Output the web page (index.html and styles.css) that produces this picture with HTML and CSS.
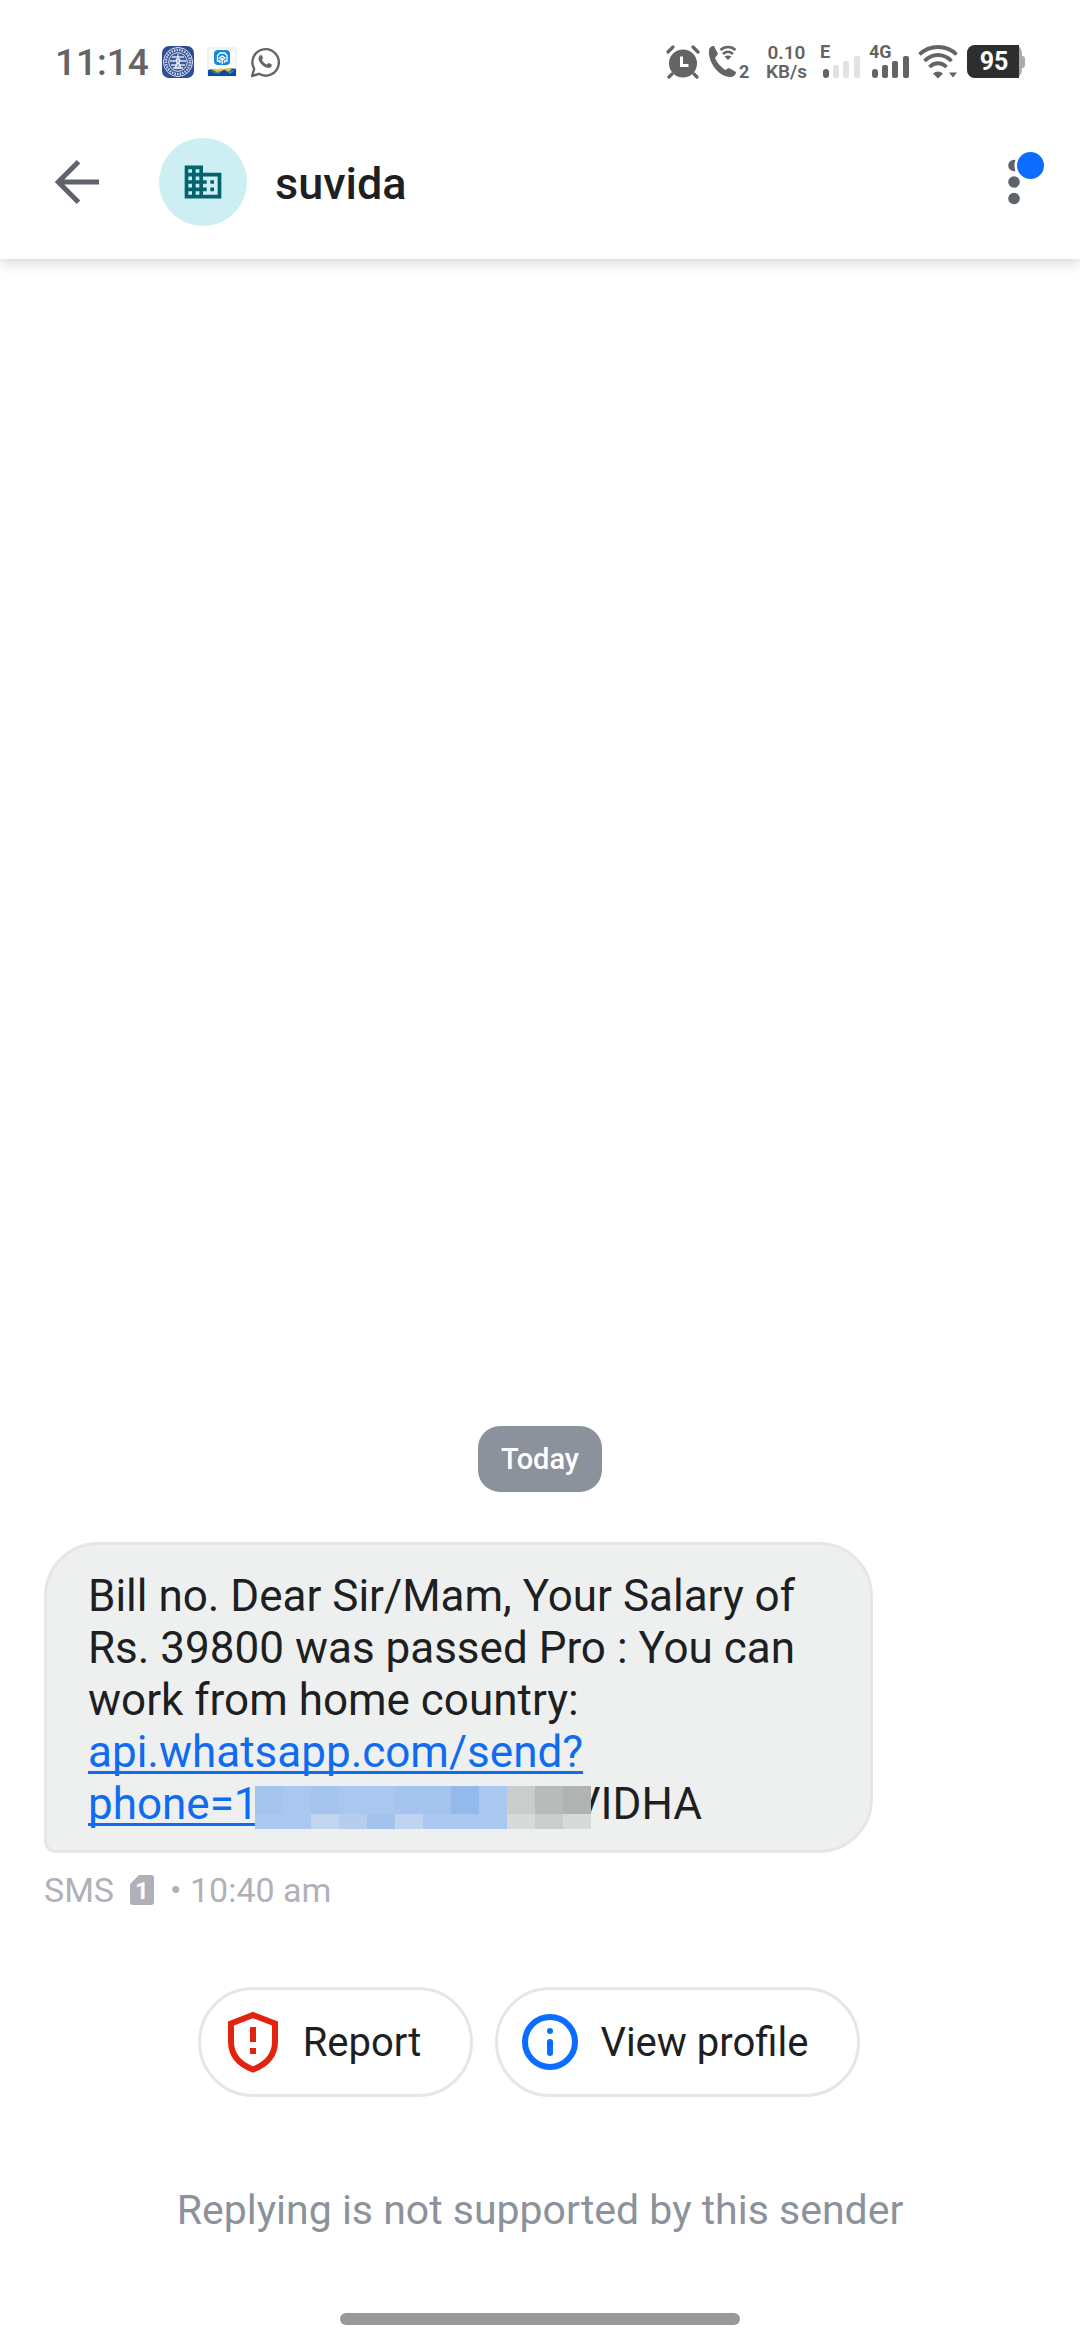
FILE: index.html
```html
<!DOCTYPE html>
<html lang="en">
<head>
  <meta charset="UTF-8" />
  <meta name="viewport" content="width=device-width, initial-scale=1.0"/>
  <title>suvida</title>
  <link rel="stylesheet" href="styles.css">
</head>
<body>
  <div class="status-bar">
    <div class="status-left">
      <span class="clock">11:14</span>
      <svg width="32" height="32" viewBox="0 0 32 32">
        <rect width="32" height="32" rx="7" fill="#2f4d93"/>
        <circle cx="16" cy="16" r="14.5" fill="none" stroke="#dfe6f4" stroke-width="1"/>
        <circle cx="16" cy="16" r="12" fill="none" stroke="#c3cee6" stroke-width="2.6" stroke-dasharray="1.6 1"/>
        <circle cx="16" cy="16" r="9.3" fill="#3d5999" stroke="#e8edf7" stroke-width="1"/>
        <path d="M10 11h12M8 15h16M9 19h14M11 22h10" stroke="#dde4f1" stroke-width="1.5"/>
        <path d="M16 8v5M14 13h4l-1 4h-2zM13 22l2-5h2l2 5z" stroke="#fff" stroke-width="1" fill="#9fb0d5"/>
      </svg>
      <svg width="30" height="32" viewBox="0 0 30 32">
        <rect x="1" y="2" width="28" height="28" fill="#fafafa" stroke="#e6e6e6" stroke-width="1"/>
        <rect x="7" y="4" width="16" height="15" rx="4" fill="#1687dc"/>
        <path d="M13 17v-2h-2.500V9.500L13 7h4.500L20 9.500V15h-2.500v2M15.200 18v-6M12.500 12l2.700-2 2.800 2-2.800 2z" fill="none" stroke="#fff" stroke-width="1.300"/>
        <path d="M1 24c5-2 8 1 14 0s9-2 14-1v7H1z" fill="#17479b"/>
        <path d="M5 24c3-3 5 1 9-2l2 2-4 3zM17 23c3-2 5 0 8 0l-4 3z" fill="#f2bd2c"/>
        <path d="M2 25l7 1 6-1-4 3zM16 22l4 4 8-2-5 4z" fill="#279f9e"/>
      </svg>
      <svg width="30" height="32" viewBox="0 0 30 32" fill="none" stroke="#666">
        <path d="M2 30l2.200-7A13.200 13.200 0 1 1 9 27.800z" stroke-width="2.400" stroke-linejoin="round"/>
        <path d="M10 9.500c.8-.8 1.700-.6 2 .2l1 2.300c.2.700-1.200 1.700-.9 2.300 1 1.900 2.500 3.300 4.500 4.100.8.200 1.600-1.700 2.300-1.400l2.500 1.200c.8.500.3 2.300-.6 3-1.200.9-2.600.9-4.400.3-3.500-1.300-5.800-3.700-7.400-6.800-.9-2.100-.4-3.900 1-5.200z" fill="#666" stroke="none"/>
      </svg>
    </div>
    <div class="status-right">
      <svg width="34" height="34" viewBox="0 0 34 34" fill="none" stroke="#646464" stroke-linecap="round">
        <circle cx="17" cy="18.500" r="14" fill="#646464" stroke="none"/>
        <path d="M2 7l5-5M27 2l5 5M6 29l-3 3M28 29l3 3" stroke-width="3.200"/>
        <path d="M15.500 11.500v9h7" stroke="#fff" stroke-width="3" stroke-linecap="butt"/>
      </svg>
      <svg width="42" height="44" viewBox="0 -5 42 44">
        <path d="M1 6c0-3 2-5 5-5l4 8-3 4c2 5 6 9 10 12l4-2 7 4c0 3-3 5-6 5C11 32 0 17 1 6z" fill="#646464"/>
        <path d="M12.500 5c4-4 11-4 15 0M15 9c3-3 7-3 10 0" fill="none" stroke="#646464" stroke-width="2.600"/>
        <path d="M16.500 11.500q3.500-2 7 0L20 15z" fill="#646464"/>
        <text x="31" y="33" class="net">2</text>
      </svg>
      <div class="speed"><span>0.10</span><span>KB/s</span></div>
      <svg width="41" height="44" viewBox="0 -5 41 44">
        <text x="0" y="13" class="net">E</text>
        <rect x="3" y="24" width="6" height="9" rx="3" fill="#646464"/>
        <g fill="#e2e2e2">
          <rect x="13" y="20" width="6" height="13" rx="2"/>
          <rect x="23" y="16" width="6" height="17" rx="2"/>
          <rect x="34" y="11" width="6" height="22" rx="2"/>
        </g>
      </svg>
      <svg width="41" height="44" viewBox="0 -5 41 44">
        <text x="0" y="13" class="net">4G</text>
        <g fill="#646464">
          <rect x="3" y="24" width="6" height="9" rx="3"/>
          <rect x="13" y="20" width="6" height="13" rx="2"/>
          <rect x="23" y="16" width="6" height="17" rx="2"/>
          <rect x="34" y="11" width="6" height="22" rx="2"/>
        </g>
      </svg>
      <svg width="41" height="34" viewBox="0 0 41 34">
        <path d="M1.500 9.500c10-10 27-10 37 0M6.500 16c8-8 19-8 27 0M11.500 22c5-5 12-5 17 0" fill="none" stroke="#646464" stroke-width="3.800"/>
        <path d="M15 28.500q5-4 10 0l-5 5zM31 27.500h8l-4 5z" fill="#646464"/>
      </svg>
      <svg width="58" height="34" viewBox="0 0 58 34">
        <rect width="55" height="33" rx="8" fill="#aaa"/>
        <rect x="50" y="11" width="8" height="12" rx="3" fill="#aaa"/>
        <path d="M8 0h44v33H8a8 8 0 0 1-8-8V8a8 8 0 0 1 8-8z" fill="#2e2e2e"/>
        <text x="27" y="25" class="percent">95</text>
      </svg>
    </div>
  </div>

  <header class="header">
    <button class="icon-btn" aria-label="Back">
      <svg width="44" height="44" viewBox="0 0 44 44" fill="none" stroke="#5f636b" stroke-width="5">
        <path d="M44 22H4M23.500 1.800L3.300 22l20.200 20.200"/>
      </svg>
    </button>
    <div class="avatar">
      <svg width="44" height="44" viewBox="0 0 24 24" fill="#03646d">
        <path d="M12 7V3H2v18h20V7H12zM6 19H4v-2h2v2zm0-4H4v-2h2v2zm0-4H4V9h2v2zm0-4H4V5h2v2zm4 12H8v-2h2v2zm0-4H8v-2h2v2zm0-4H8V9h2v2zm0-4H8V5h2v2zm10 12h-8v-2h2v-2h-2v-2h2v-2h-2V9h8v10zm-2-8h-2v2h2v-2zm0 4h-2v2h2v-2z"/>
      </svg>
    </div>
    <h1>suvida</h1>
    <button class="icon-btn" aria-label="More options">
      <svg width="38" height="60" viewBox="0 0 38 60">
        <g fill="#5f636b">
          <circle cx="8" cy="13.500" r="5.800"/>
          <circle cx="8" cy="30" r="5.800"/>
          <circle cx="8" cy="46.500" r="5.800"/>
        </g>
        <circle cx="24.500" cy="13.500" r="16" fill="#fff"/>
        <circle cx="24.500" cy="13.500" r="13.500" fill="#0b6cff"/>
      </svg>
    </button>
  </header>

  <main class="thread">
    <div class="day">Today</div>
    <div class="bubble">
      Bill no. Dear Sir/Mam, Your Salary of<br>
      Rs. 39800 was passed Pro : You can<br>
      work from home country:<br>
      <a href="#">api.whatsapp.com/send?<br>phone=1</a><svg class="mosaic" width="336" height="43" viewBox="0 0 336 43" shape-rendering="crispEdges">
        <rect width="252" height="43" fill="#a9c7ef"/>
        <rect width="28" height="28" fill="#a5c4ed"/>
        <rect x="56" width="28" height="28" fill="#a4c3ed"/>
        <rect x="140" width="28" height="28" fill="#a5c4ed"/>
        <rect x="168" width="28" height="28" fill="#a4c4ee"/>
        <rect x="196" width="28" height="28" fill="#94baec"/>
        <rect x="56" y="28" width="28" height="15" fill="#c1d5f1"/>
        <rect x="84" y="28" width="28" height="15" fill="#b6cdec"/>
        <rect x="112" y="28" width="28" height="15" fill="#a3c3ee"/>
        <rect x="140" y="28" width="28" height="15" fill="#c0d4f2"/>
        <rect x="252" width="28" height="28" fill="#cbcdcc"/>
        <rect x="280" width="28" height="28" fill="#b8bbba"/>
        <rect x="308" width="28" height="28" fill="#b0b3b2"/>
        <rect x="252" y="28" width="28" height="15" fill="#d8dada"/>
        <rect x="280" y="28" width="28" height="15" fill="#cbcccc"/>
        <rect x="308" y="28" width="28" height="15" fill="#d7dad9"/>
      </svg><span class="tail">VIDHA</span>
    </div>
    <div class="meta">
      <span>SMS</span>
      <svg width="24" height="30" viewBox="0 0 24 30">
        <path d="M9 0h12a3 3 0 0 1 3 3v24a3 3 0 0 1-3 3H3a3 3 0 0 1-3-3V9z" fill="#b0b1b8"/>
        <text x="12" y="24" class="sim">1</text>
      </svg>
      <span>• 10:40 am</span>
    </div>
  </main>

  <div class="actions">
    <button class="chip">
      <svg width="56" height="62" viewBox="0 0 56 62">
        <path d="M28 4L50 12.500v18c0 14-9 23-22 28-13-5-22-14-22-28v-18z" fill="none" stroke="#e3220f" stroke-width="6"/>
        <path d="M25 16h6v15h-6zM25 37h6v6h-6z" fill="#e3220f"/>
      </svg>
      Report
    </button>
    <button class="chip">
      <svg width="56" height="62" viewBox="0 0 56 62">
        <circle cx="28" cy="31" r="25" fill="none" stroke="#0b6cff" stroke-width="6"/>
        <circle cx="28" cy="20" r="3" fill="#0b6cff"/>
        <path d="M28 31v11" stroke="#0b6cff" stroke-width="6" stroke-linecap="round"/>
      </svg>
      View profile
    </button>
  </div>

  <p class="notice">Replying is not supported by this sender</p>
  <div class="nav-handle"></div>
</body>
</html>
```
FILE: styles.css
```css
* {
  box-sizing: border-box;
}

body {
  margin: 0;
  min-height: 100vh;
  display: flex;
  flex-direction: column;
  font-family: Roboto, sans-serif;
  background: #fff;
  color: #1d1f22;
}

svg {
  flex: none;
  display: block;
}

button {
  font-family: inherit;
  color: inherit;
  background: none;
  border: none;
  padding: 0;
}

/* sits above the header so its shadow only shows below */
.status-bar {
  position: relative;
  z-index: 1;
  display: flex;
  justify-content: space-between;
  align-items: center;
  height: 104px;
  padding: 20px 55px 0;
  background: #fff;
  color: #646464;
}

.status-left,
.status-right {
  display: flex;
  align-items: center;
}

.status-left {
  gap: 13px;
}

.status-right {
  gap: 8px;
}

.clock {
  font-size: 37px;
  font-weight: 500;
}

.speed {
  display: flex;
  flex-direction: column;
  align-items: center;
  padding: 0 5px 0 8px;
  font-size: 19px;
  line-height: 19px;
  font-weight: 600;
}

.net {
  font-size: 18px;
  font-weight: 700;
  fill: #646464;
}

.percent {
  font-size: 25px;
  font-weight: 700;
  text-anchor: middle;
  fill: #fff;
}

.header {
  display: flex;
  align-items: center;
  height: 155px;
  padding: 0 36px 0 55px;
  box-shadow: 0 3px 14px rgba(0, 0, 0, 0.18);
}

.avatar {
  display: flex;
  align-items: center;
  justify-content: center;
  width: 88px;
  height: 88px;
  margin: 0 28px 0 60px;
  border-radius: 50%;
  background: #cdeef2;
}

h1 {
  flex: 1;
  margin: 0;
  padding-top: 3px;
  font-size: 45px;
  font-weight: 500;
}

.thread {
  flex: 1;
  display: flex;
  flex-direction: column;
  justify-content: flex-end;
  align-items: flex-start;
  padding: 0 44px;
}

.day {
  align-self: center;
  padding: 0 23px;
  margin-bottom: 50px;
  border-radius: 22px;
  background: #8c929b;
  color: #fff;
  font-size: 29px;
  line-height: 66px;
  font-weight: 500;
}

.bubble {
  align-self: stretch;
  margin-right: 163px;
  padding: 25px 41px 20px;
  border: 3px solid #e5e7e7;
  border-radius: 54px 54px 54px 12px;
  background: #eef0f0;
  font-size: 44px;
  line-height: 52px;
}

.bubble a {
  color: #0f6bf0;
  text-decoration-thickness: 3px;
  text-underline-offset: 4px;
  text-decoration-skip-ink: none;
}

.mosaic {
  display: inline-block;
  position: relative;
  z-index: 1;
  margin: -10px 0 -10px -4px;
}

.tail {
  margin-left: -18px;
}

.meta {
  display: flex;
  align-items: center;
  gap: 16px;
  margin-top: 16px;
  font-size: 34px;
  line-height: 42px;
  color: #b0b1b8;
}

.sim {
  font-size: 24px;
  font-weight: 700;
  text-anchor: middle;
  fill: #fff;
}

.actions {
  display: flex;
  justify-content: center;
  gap: 22px;
  padding-right: 22px;
  margin-top: 76px;
}

.chip {
  display: flex;
  align-items: center;
  gap: 22px;
  height: 110px;
  padding: 0 49px 0 24px;
  border: 3px solid #e6e6e6;
  border-radius: 55px;
  font-size: 40px;
}

.notice {
  margin: 84px 0 74px;
  text-align: center;
  font-size: 41px;
  line-height: 58px;
  color: #8c929b;
}

.nav-handle {
  width: 37%;
  height: 12px;
  margin: 0 auto 19px;
  border-radius: 6px;
  background: #999;
}
```
